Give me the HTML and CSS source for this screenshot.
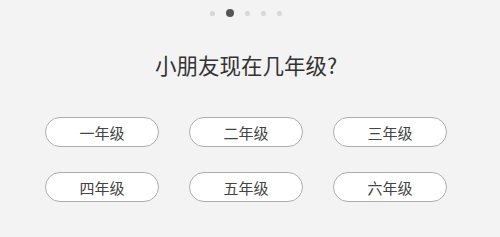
FILE: index.html
```html
<!DOCTYPE html>
<html>
<head>
    <meta charset="UTF-8">
    <title>选择年级</title>
    <link rel="stylesheet" href="styles.css">
</head>
<body>
    <div class="page">
        <div class="dots">
            <span class="dot"></span>
            <span class="dot active"></span>
            <span class="dot"></span>
            <span class="dot"></span>
            <span class="dot"></span>
        </div>

        <h2 class="question">小朋友现在几年级?</h2>

        <div class="grade-grid">
            <button class="grade-option">一年级</button>
            <button class="grade-option">二年级</button>
            <button class="grade-option">三年级</button>
            <button class="grade-option">四年级</button>
            <button class="grade-option">五年级</button>
            <button class="grade-option">六年级</button>
        </div>
    </div>
</body>
</html>
```

FILE: styles.css
```css
body {
    margin: 0;
    background-color: #f3f3f3;
    font-family: "Noto Sans CJK SC", "Noto Sans", sans-serif;
}
.page {
    width: 492px;
    height: 237px;
    display: flex;
    flex-direction: column;
    align-items: center;
}
.dots {
    display: flex;
    align-items: center;
    gap: 11px;
    height: 8px;
    margin-top: 9px;
}
.dot {
    width: 5px;
    height: 5px;
    border-radius: 50%;
    background-color: #d6d6d6;
}
.dot.active {
    width: 8px;
    height: 8px;
    background-color: #555;
}
.question {
    margin: 33px 0 0;
    font-size: 21.5px;
    font-weight: normal;
    line-height: 30px;
    color: #333;
}
.grade-grid {
    display: grid;
    grid-template-columns: repeat(3, 114px);
    column-gap: 30px;
    row-gap: 25px;
    margin-top: 37px;
}
.grade-option {
    height: 30px;
    padding: 0;
    border: 1.5px solid #adadad;
    border-radius: 15px;
    background-color: #fff;
    font-family: inherit;
    font-size: 15px;
    color: #444;
    cursor: pointer;
}
```
